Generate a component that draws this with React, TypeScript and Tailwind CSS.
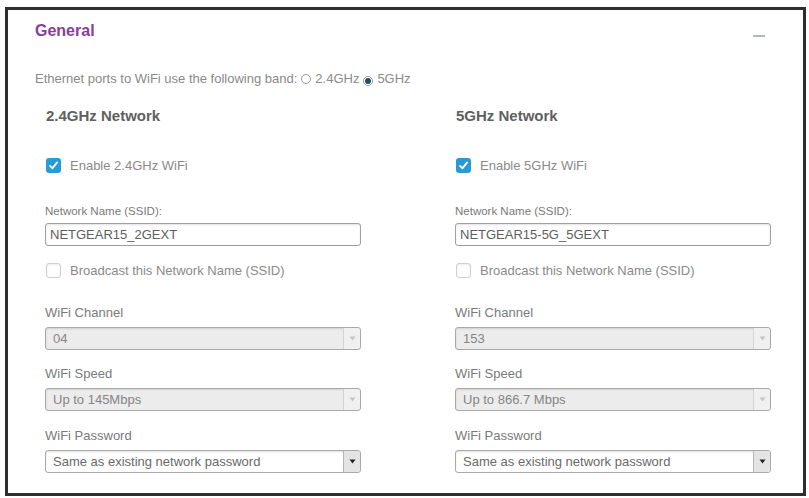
import React from "react";

const font = { fontFamily: '"Liberation Sans", Arial, sans-serif' };

const Check = ({ checked }: { checked: boolean }) =>
  checked ? (
    <span className="w-[15px] h-[15px] rounded-[3px] bg-[#2a9ad6] flex items-center justify-center shrink-0">
      <svg width="11" height="11" viewBox="0 0 12 12">
        <path d="M2.2 6.4 L4.9 9 L9.8 2.8" fill="none" stroke="#fff" strokeWidth="2" strokeLinecap="round" strokeLinejoin="round" />
      </svg>
    </span>
  ) : (
    <span className="w-[15px] h-[15px] rounded-[3px] border border-[#cfcfcf] bg-white shadow-[inset_0_1px_2px_rgba(0,0,0,0.08)] shrink-0" />
  );

const Radio = ({ on }: { on: boolean }) => (
  <span className="inline-flex w-[10px] h-[10px] rounded-full border border-[#9a9a9a] bg-white items-center justify-center mx-[4px] align-[-1px]">
    {on && <span className="w-[6px] h-[6px] rounded-full bg-[#1f4f5a]" />}
  </span>
);

const Select = ({ value, disabled }: { value: string; disabled?: boolean }) => (
  <div
    className={
      "h-[23px] w-[316px] rounded-[3px] border border-[#a9a9a9] flex items-stretch shadow-[inset_0_1px_2px_rgba(0,0,0,0.12)] " +
      (disabled ? "bg-[#ececec]" : "bg-white")
    }
  >
    <span className={"flex-1 pl-[7px] text-[13px] leading-[21px] " + (disabled ? "text-[#858585]" : "text-[#6a6a6a]")}>
      {value}
    </span>
    <span
      className={
        "w-[17px] border-l flex items-center justify-center rounded-r-[3px] " +
        (disabled ? "border-[#d4d4d4] bg-[#f0f0f0]" : "border-[#b5b5b5] bg-[#e4e4e4]")
      }
    >
      <svg width="7" height="5" viewBox="0 0 7 5">
        <path d="M0.5 0.5 H6.5 L3.5 4.5 Z" fill={disabled ? "#c4c4c4" : "#222"} />
      </svg>
    </span>
  </div>
);

const Column = (props: {
  title: string;
  enable: string;
  ssid: string;
  channel: string;
  speed: string;
}) => (
  <div className="w-[316px] flex flex-col">
    <div className="text-[15px] leading-[18px] font-bold text-[#606060] pl-[1px]">{props.title}</div>
    <div className="mt-[33px] flex items-center gap-[9px] pl-[1px]">
      <Check checked />
      <span className="text-[13px] leading-[15px] text-[#8a8a8a]">{props.enable}</span>
    </div>
    <div className="mt-[31px] text-[11.5px] leading-[14px] text-[#7a7a7a]">Network Name (SSID):</div>
    <div className="mt-[5px] h-[23px] rounded-[3px] border border-[#a0a0a0] bg-white shadow-[inset_0_1px_2px_rgba(0,0,0,0.12)] pl-[4px] text-[13px] leading-[21px] text-[#5e5e5e]">
      {props.ssid}
    </div>
    <div className="mt-[17px] flex items-center gap-[9px] pl-[1px]">
      <Check checked={false} />
      <span className="text-[13px] leading-[15px] text-[#8a8a8a]">Broadcast this Network Name (SSID)</span>
    </div>
    <div className="mt-[27px] text-[13px] leading-[15px] text-[#7a7a7a]">WiFi Channel</div>
    <div className="mt-[7px]">
      <Select value={props.channel} disabled />
    </div>
    <div className="mt-[16px] text-[13px] leading-[15px] text-[#7a7a7a]">WiFi Speed</div>
    <div className="mt-[7px]">
      <Select value={props.speed} disabled />
    </div>
    <div className="mt-[17px] text-[13px] leading-[15px] text-[#7a7a7a]">WiFi Password</div>
    <div className="mt-[7px]">
      <Select value="Same as existing network password" />
    </div>
  </div>
);

export default function App() {
  return (
    <div className="w-[809px] h-[498px] bg-white pt-[7px] pl-[5px]" style={font}>
      <div className="w-[801px] h-[489px] border-[3px] border-[#2e2e2e] bg-white flex flex-col pl-[27px]">
        {/* header */}
        <div className="mt-[13px] flex items-center pr-[38px]">
          <span className="text-[16px] leading-[16px] font-bold text-[#8d3a9e]">General</span>
          <span className="ml-auto mt-[9px] w-[12px] h-[2px] bg-[#a9bdbd]" />
        </div>

        <div className="mt-[32px] text-[13px] leading-[15px] text-[#8a8a8a]">
          Ethernet ports to WiFi use the following band:
          <Radio on={false} />
          2.4GHz
          <Radio on />
          5GHz
        </div>

        <div className="mt-[21px] ml-[10px] flex gap-[94px]">
          <Column
            title="2.4GHz Network"
            enable="Enable 2.4GHz WiFi"
            ssid="NETGEAR15_2GEXT"
            channel="04"
            speed="Up to 145Mbps"
          />
          <Column
            title="5GHz Network"
            enable="Enable 5GHz WiFi"
            ssid="NETGEAR15-5G_5GEXT"
            channel="153"
            speed="Up to 866.7 Mbps"
          />
        </div>
      </div>
    </div>
  );
}
